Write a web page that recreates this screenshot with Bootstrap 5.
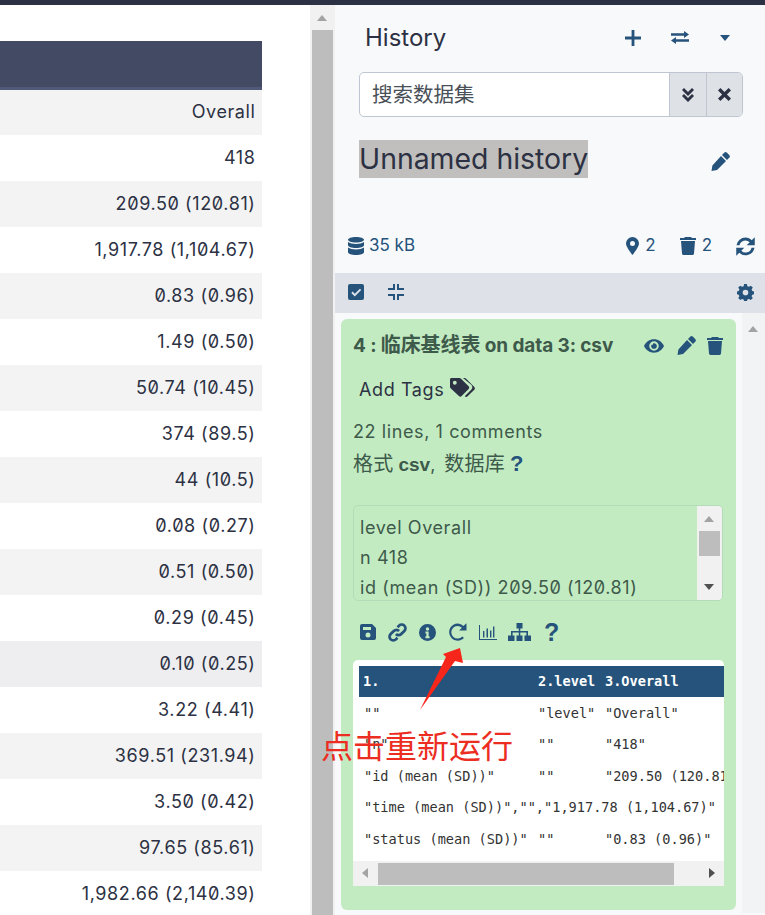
<!DOCTYPE html>
<html lang="zh">
<head>
<meta charset="utf-8">
<title>Galaxy history</title>
<link href="https://cdn.jsdelivr.net/npm/bootstrap@5.3.0/dist/css/bootstrap.min.css" rel="stylesheet">
<style>
:root{--ink:#2c3143;--blue:#25537b;--ui:"Inter","Noto Sans CJK SC",sans-serif;}
html,body{height:915px;overflow:hidden;}
body{font-family:var(--ui);font-size:18px;letter-spacing:.6px;color:var(--ink);font-feature-settings:"zero";background:#fff;}
svg{display:block;fill:var(--blue);flex:none;}
.topline{height:5px;background:var(--ink);}
.shell{height:910px;}
.leftpane{width:310px;padding-top:36px;overflow:hidden;flex:none;}
.thead-bar{height:49px;background:#424a64;border-bottom:3px solid #50597a;width:262px;}
.trow{height:46px;width:262px;padding:0 6.500px 2px 0;display:flex;align-items:center;justify-content:flex-end;}
.trow.hd{height:45px;}
.trow.alt{background:#f3f3f3;}
.trow.hot{background:#eeeef0;}
.sb{background:#f1f1f1;position:relative;}
.tri{width:0;height:0;border-style:solid;position:absolute;}
.tri.up{border-width:0 5.500px 6px;border-color:transparent transparent #a3a3a3;}
.tri.down{border-width:6px 5.500px 0;border-color:#505050 transparent transparent;}
.tri.left{border-width:5.500px 6px 5.500px 0;border-color:transparent #a3a3a3 transparent transparent;}
.tri.right{border-width:5.500px 0 5.500px 6px;border-color:transparent transparent transparent #505050;}
.thumb{background:#bdbdbd;position:absolute;}
.pagebar{width:25px;flex:none;}
.pagebar .thumb{left:2px;width:21px;top:25px;bottom:0;}
.pagebar .up{left:7px;top:10px;}
.rightpane{width:430px;background:#f8f9fb;flex:none;}
.hist-head{padding:18px 35px 0 30px;height:67px;}
.hist-title{font-size:24px;line-height:29px;letter-spacing:0;}
.hist-btns{height:29px;}
.sw-btn{margin-left:30px;}
.car-btn{margin-left:31px;}
.searchbox{margin:0 22px 0 24px;height:45px;border:1px solid #bfc6d2;border-radius:5px;overflow:hidden;background:#fff;}
.searchbox .txt{padding-left:12px;font-size:20.500px;letter-spacing:0;color:#495057;line-height:43px;}
.searchbox .cap{width:36.500px;background:#dee2e6;border-left:1px solid #bfc6d2;}
.name-row{margin:23px 35px 0 24px;height:38px;}
.hname{font-size:28.400px;letter-spacing:0;line-height:38px;background:#c1bfbd;}
.edit-btn{margin-top:12px;}
.stats{margin:54px 10px 0 13px;font-size:17px;letter-spacing:0;color:var(--blue);height:27px;padding-top:1px;}
.size-txt{margin-left:5px;}
.gap24{margin-left:24px;}
.stat-n{margin-left:6px;}
.tools{margin-top:14px;height:40px;background:#dee2e8;padding:0 11px 2px 13px;}
.fold-btn{margin-left:24px;}
.listwrap{height:600px;}
.dscard{width:395px;margin:6px 0 0 6px;height:591px;background:#c3ebc2;border-radius:6px;padding:12px 13px 0 12px;color:#3d5a4a;position:relative;flex:none;}
.dstitle{font-weight:700;font-size:19px;line-height:28px;letter-spacing:-.1px;}
.dstitle span{font-size:20px;}
.eye-btn{margin-left:13px;}
.bin-btn{margin-left:11px;}
.addtags{color:var(--ink);margin:16px 0 0 6px;line-height:28px;}
.tag-ico{margin-left:6px;margin-top:-4px;}
.meta1{margin-top:14px;line-height:28px;}
.meta2{margin-top:4px;line-height:28px;letter-spacing:0;}
.zh{font-size:20px;letter-spacing:.2px;}
.csv-b{font-family:"Liberation Sans",sans-serif;font-size:19px;font-weight:700;}
.zh-gap{margin-left:9px;}
.q-small{color:var(--blue);font-family:"Liberation Sans",sans-serif;font-size:22px;font-weight:700;}
.peek{margin-top:26px;width:370px;height:96px;border:1px solid #b5dcb8;border-radius:5px;position:relative;overflow:hidden;padding:7px 0 0 6px;line-height:30px;white-space:nowrap;}
.peek .sb{position:absolute;right:0;top:0;bottom:0;width:25px;}
.peek .thumb{left:2px;right:2px;top:25px;height:25px;}
.peek .up{left:7px;top:10px;}
.peek .down{left:7px;bottom:10px;}
.acts{margin-top:19px;height:24px;padding-left:7px;gap:12px;}
.redo-ico{margin-left:1px;}
.tree-ico{margin-left:-1px;}
.q-big{color:var(--blue);font-family:"Liberation Sans",sans-serif;font-size:25px;line-height:24px;letter-spacing:0;margin-left:1px;}
.pre{margin-top:16px;width:371px;height:226px;background:#fff;border-radius:5px 5px 0 0;position:relative;overflow:hidden;padding:6px 0 0 6px;}
.pre-table{font-family:"DejaVu Sans Mono","Liberation Mono",monospace;font-size:13.600px;letter-spacing:0;color:#333;font-feature-settings:normal;width:365px;overflow:hidden;}
.pre-line{height:31.400px;line-height:32px;padding-left:5px;white-space:pre;}
.pre-line.h{height:31px;line-height:31px;background:var(--blue);color:#fff;font-weight:700;padding-left:4px;}
.pre-line.h,.pre-line.d{display:flex;}
.c1{width:174px;flex:none;}.c2{width:67px;flex:none;}
.pre-line.h .c1{width:175px;}
.hbar{position:absolute;left:0;right:0;bottom:0;height:25px;background:#f1f1f1;}
.hbar .thumb{left:25px;width:296px;top:2px;bottom:1px;}
.hbar .left{left:9px;top:7px;}
.hbar .right{right:9px;top:7px;}
.listbar{width:23px;margin-left:6px;background:#f1f3f5;flex:none;}
.listbar .up{left:6px;top:13px;}
.note{position:absolute;left:321px;top:724px;font-size:32px;letter-spacing:0;line-height:40px;color:#ec2d22;font-family:"Noto Sans CJK SC",sans-serif;white-space:nowrap;}
.arrow{position:absolute;left:415px;top:640px;width:55px;height:75px;}
.arrow path{fill:#f6261a;}
</style>
</head>
<body>
<div class="topline"></div>
<div class="shell d-flex">
  <div class="leftpane">
    <div class="thead-bar"></div>
    <div class="trow hd alt">Overall</div>
    <div class="trow">418</div>
    <div class="trow alt">209.50 (120.81)</div>
    <div class="trow">1,917.78 (1,104.67)</div>
    <div class="trow alt">0.83 (0.96)</div>
    <div class="trow">1.49 (0.50)</div>
    <div class="trow alt">50.74 (10.45)</div>
    <div class="trow">374 (89.5)</div>
    <div class="trow alt">44 (10.5)</div>
    <div class="trow">0.08 (0.27)</div>
    <div class="trow alt">0.51 (0.50)</div>
    <div class="trow">0.29 (0.45)</div>
    <div class="trow hot">0.10 (0.25)</div>
    <div class="trow">3.22 (4.41)</div>
    <div class="trow alt">369.51 (231.94)</div>
    <div class="trow">3.50 (0.42)</div>
    <div class="trow alt">97.65 (85.61)</div>
    <div class="trow">1,982.66 (2,140.39)</div>
  </div>
  <div class="sb pagebar"><div class="tri up"></div><div class="thumb"></div></div>
  <div class="rightpane">
    <div class="hist-head d-flex justify-content-between align-items-start">
      <div class="hist-title">History</div>
      <div class="d-flex align-items-center hist-btns">
        <svg width="16" height="16" viewBox="0 0 16 16"><path d="M6.600 0h2.800v6.600H16v2.800H9.400V16H6.600V9.400H0V6.600h6.600z"/></svg>
        <svg class="sw-btn" width="18" height="13" viewBox="0 0 18 13"><path d="M0 2.300h13V0l5 3.500-5 3.500V4.700H0zM18 8.300H5V6L0 9.500 5 13v-2.300h13z"/></svg>
        <svg class="car-btn" width="10" height="6" viewBox="0 0 10 6"><path d="M0 0h10L5 6z"/></svg>
      </div>
    </div>
    <div class="searchbox d-flex">
      <div class="txt flex-grow-1">搜索数据集</div>
      <div class="cap d-flex align-items-center justify-content-center">
        <svg width="12" height="14" viewBox="0 0 12 14"><path style="fill:#2c3143" d="M2 0l4 4 4-4 2 2-6 6-6-6zM2 6l4 4 4-4 2 2-6 6-6-6z"/></svg>
      </div>
      <div class="cap d-flex align-items-center justify-content-center">
        <svg width="13" height="13" viewBox="0 0 12 12"><path style="fill:#2c3143" d="M2.200 0L6 3.800 9.800 0 12 2.200 8.200 6 12 9.800 9.800 12 6 8.200 2.200 12 0 9.800 3.800 6 0 2.200z"/></svg>
      </div>
    </div>
    <div class="name-row d-flex justify-content-between align-items-start">
      <span class="hname">Unnamed history</span>
      <svg class="edit-btn" width="19" height="19" viewBox="0 0 19 19"><path d="M13.200.8a2 2 0 0 1 2.800 0l2.200 2.200a2 2 0 0 1 0 2.800L16 8 11 3zM10 4l5 5-9 9-5.500 1 .9-5.600z"/></svg>
    </div>
    <div class="stats d-flex align-items-center">
      <svg width="16" height="18" viewBox="0 0 16 18"><path d="M8 0c4.400 0 8 1.200 8 2.800S12.400 5.600 8 5.600 0 4.400 0 2.800 3.600 0 8 0zM0 5c1.600 1.300 4.800 2 8 2s6.400-.7 8-2v3.200C16 9.800 12.400 11 8 11S0 9.800 0 8.200zM0 10.400c1.600 1.300 4.800 2 8 2s6.400-.7 8-2v4.800C16 16.800 12.400 18 8 18s-8-1.200-8-2.800z"/></svg>
      <span class="size-txt">35 kB</span>
      <svg class="ms-auto" width="13" height="18" viewBox="0 0 13 18"><path fill-rule="evenodd" d="M6.500 0A6.500 6.500 0 0 1 13 6.500C13 9.500 8.500 15.500 6.500 18 4.500 15.500 0 9.500 0 6.500A6.500 6.500 0 0 1 6.500 0zm0 4a2.500 2.500 0 1 0 0 5 2.500 2.500 0 0 0 0-5z"/></svg>
      <span class="stat-n">2</span>
      <svg class="gap24" width="16" height="18" viewBox="0 0 16 18"><path d="M5 0h6l1 1h4v2H0V1h4zM1 4h14l-1 12.500a1.600 1.600 0 0 1-1.600 1.500H3.600A1.600 1.600 0 0 1 2 16.500z"/></svg>
      <span class="stat-n">2</span>
      <svg class="gap24" width="19" height="19" viewBox="2 1 15 15.400"><path d="M9.500 1.500c2 0 3.700.8 5 2.100L17 1.200v6.500h-6.500l2.400-2.400A4.900 4.900 0 0 0 4.600 7.700H2.200A7.400 7.400 0 0 1 9.500 1.500zM2 9.700h6.500l-2.400 2.400a4.900 4.900 0 0 0 8.300-2.400h2.400a7.400 7.400 0 0 1-12.300 4.100L2 16.200z"/></svg>
    </div>
    <div class="tools d-flex align-items-center">
      <svg width="16" height="16" viewBox="0 0 16 16"><path fill-rule="evenodd" d="M2 0h12a2 2 0 0 1 2 2v12a2 2 0 0 1-2 2H2a2 2 0 0 1-2-2V2a2 2 0 0 1 2-2zm4.800 12.400l6.400-6.400-1.300-1.300-5.100 5.100-2.200-2.200L3.300 8.900z"/></svg>
      <svg class="fold-btn" width="16" height="16" viewBox="0 0 16 16"><path d="M0 4h5V0h2v6H0zM16 4h-5V0H9v6h7zM0 10h7v6H5v-4H0zM16 10H9v6h2v-4h5z"/></svg>
      <svg class="ms-auto" width="17" height="17" viewBox="0 0 24 24"><path fill-rule="evenodd" d="M10 0h4l.6 3 2.300 1 2.600-1.700 2.800 2.800-1.700 2.600 1 2.300 3 .6v3.800l-3 .6-1 2.300 1.700 2.600-2.800 2.800-2.600-1.700-2.300 1-.6 3h-4l-.6-3-2.300-1-2.600 1.700-2.800-2.800 1.700-2.600-1-2.300-3-.6v-3.800l3-.6 1-2.300L1.700 5.100l2.800-2.800L7.100 4l2.300-1zM12 8a4 4 0 1 0 0 8 4 4 0 0 0 0-8z"/></svg>
    </div>
    <div class="listwrap d-flex">
      <div class="dscard">
        <div class="d-flex justify-content-between align-items-center">
          <div class="dstitle">4 : <span>临床基线表</span> on data 3: csv</div>
          <div class="d-flex align-items-center">
            <svg width="20" height="14" viewBox="0 0 21 14"><path fill-rule="evenodd" d="M10.500 0C15 0 19 2.700 21 7c-2 4.300-6 7-10.500 7S2 11.300 0 7c2-4.300 6-7 10.500-7zm0 2a5 5 0 1 0 0 10 5 5 0 0 0 0-10zm0 2a3 3 0 1 1-2.700 1.700 1.300 1.300 0 0 0 1.800-1.600 3 3 0 0 1 .9-.1z"/></svg>
            <svg class="eye-btn" width="19" height="19" viewBox="0 0 19 19"><path d="M13.200.8a2 2 0 0 1 2.800 0l2.200 2.200a2 2 0 0 1 0 2.800L16 8 11 3zM10 4l5 5-9 9-5.500 1 .9-5.600z"/></svg>
            <svg class="bin-btn" width="16" height="18" viewBox="0 0 16 18"><path d="M5 0h6l1 1h4v2H0V1h4zM1 4h14l-1 12.500a1.600 1.600 0 0 1-1.600 1.500H3.600A1.600 1.600 0 0 1 2 16.500z"/></svg>
          </div>
        </div>
        <div class="addtags d-flex align-items-center">Add Tags
          <svg class="tag-ico" width="25" height="22" viewBox="0 0 26 21"><path style="fill:#2c3143" fill-rule="evenodd" d="M1.500 0h8.300c.5 0 1 .2 1.400.6l8.200 8.200c.8.800.8 2 0 2.800l-7.300 7.300c-.8.800-2 .8-2.800 0L.6 10.700C.2 10.300 0 9.800 0 9.300V1.500C0 .7.700 0 1.500 0zM5 3a2 2 0 1 0 0 4 2 2 0 0 0 0-4z"/><path style="fill:#2c3143" d="M13.500 0h1.600c.5 0 1 .2 1.400.6l8.800 8.800c.8.800.8 2 0 2.800l-7 7c-.8.800-2 .8-2.800 0l-.2-.2 6.800-6.800c1.500-1.500 1.500-3.500 0-5z"/></svg>
        </div>
        <div class="meta1">22 lines, 1 comments</div>
        <div class="meta2"><span class="zh">格式</span> <span class="csv-b">csv</span>,<span class="zh zh-gap">数据库</span> <span class="q-small">?</span></div>
        <div class="peek">
          <div>level Overall</div><div>n 418</div><div>id (mean (SD)) 209.50 (120.81)</div>
          <div class="sb"><div class="tri up"></div><div class="thumb"></div><div class="tri down"></div></div>
        </div>
        <div class="acts d-flex align-items-center">
          <svg width="16" height="16" viewBox="0 0 16 16"><path fill-rule="evenodd" d="M2 0h10l4 4v10a2 2 0 0 1-2 2H2a2 2 0 0 1-2-2V2a2 2 0 0 1 2-2zm1 3v3h8V3zm5 5.500a2.500 2.500 0 1 0 0 5 2.500 2.500 0 0 0 0-5z"/></svg>
          <svg width="19" height="19" viewBox="0 0 18 18"><path style="fill:none;stroke:#25537b;stroke-width:2.600" d="M7.500 10.500a3.500 3.500 0 0 0 5 0l3-3a3.500 3.500 0 0 0-5-5L9 4M10.500 7.500a3.500 3.500 0 0 0-5 0l-3 3a3.500 3.500 0 0 0 5 5L9 14"/></svg>
          <svg width="17" height="17" viewBox="0 0 18 18"><path fill-rule="evenodd" d="M9 0a9 9 0 1 1 0 18A9 9 0 0 1 9 0zm0 3.500a1.800 1.800 0 1 0 0 3.600 1.800 1.800 0 0 0 0-3.600zM6.800 8v2h1v3h-1v2h4.400v-2h-1V8z"/></svg>
          <svg class="redo-ico" width="18" height="18" viewBox="0 0 18 18"><path d="M8.500 0.500c2.300 0 4.400 1 5.800 2.400L17.500.2v7.300h-7.300l2.700-2.800a6.300 6.300 0 1 0 .4 8.800l1.700 1.500A8.600 8.600 0 1 1 8.500.5z"/></svg>
          <svg width="18" height="15" viewBox="0 0 18 15"><path d="M0 0h1v14h17v1H0zM4 6h1.400v6.500H4zM7.500 3.500H9v9H7.500zM11 5.500h1.400v7H11zM14 1.500h1.400v11H14z"/></svg>
          <svg class="tree-ico" width="23" height="18" viewBox="0 0 23 18"><path d="M8.500 0h6v5.500h-2.200V8H20v4.500h-1.600V9.500h-6.100v3h2.200V18h-6v-5.500h2.300v-3H4.600v3H3V8h7.800V5.500H8.500zM0 12.500h6.500V18H0zM16.500 12.500H23V18h-6.500z"/></svg>
          <b class="q-big">?</b>
        </div>
        <div class="pre">
          <div class="pre-table">
            <div class="pre-line h"><span class="c1">1.</span><span class="c2">2.level</span><span>3.Overall</span></div>
            <div class="pre-line d"><span class="c1">""</span><span class="c2">"level"</span><span>"Overall"</span></div>
            <div class="pre-line d"><span class="c1">"n"</span><span class="c2">""</span><span>"418"</span></div>
            <div class="pre-line d"><span class="c1">"id (mean (SD))"</span><span class="c2">""</span><span>"209.50 (120.81)"</span></div>
            <div class="pre-line">"time (mean (SD))","","1,917.78 (1,104.67)"</div>
            <div class="pre-line d"><span class="c1">"status (mean (SD))"</span><span class="c2">""</span><span>"0.83 (0.96)"</span></div>
          </div>
          <div class="hbar"><div class="tri left"></div><div class="thumb"></div><div class="tri right"></div></div>
        </div>
      </div>
      <div class="sb listbar"><div class="tri up"></div></div>
    </div>
  </div>
</div>
<svg class="arrow" viewBox="0 0 55 75"><path d="M5 70L31 17 28 14 45 8 48 23 40 21z"/></svg>
<div class="note">点击重新运行</div>
<script src="https://cdn.jsdelivr.net/npm/bootstrap@5.3.0/dist/js/bootstrap.bundle.min.js"></script>
</body>
</html>
